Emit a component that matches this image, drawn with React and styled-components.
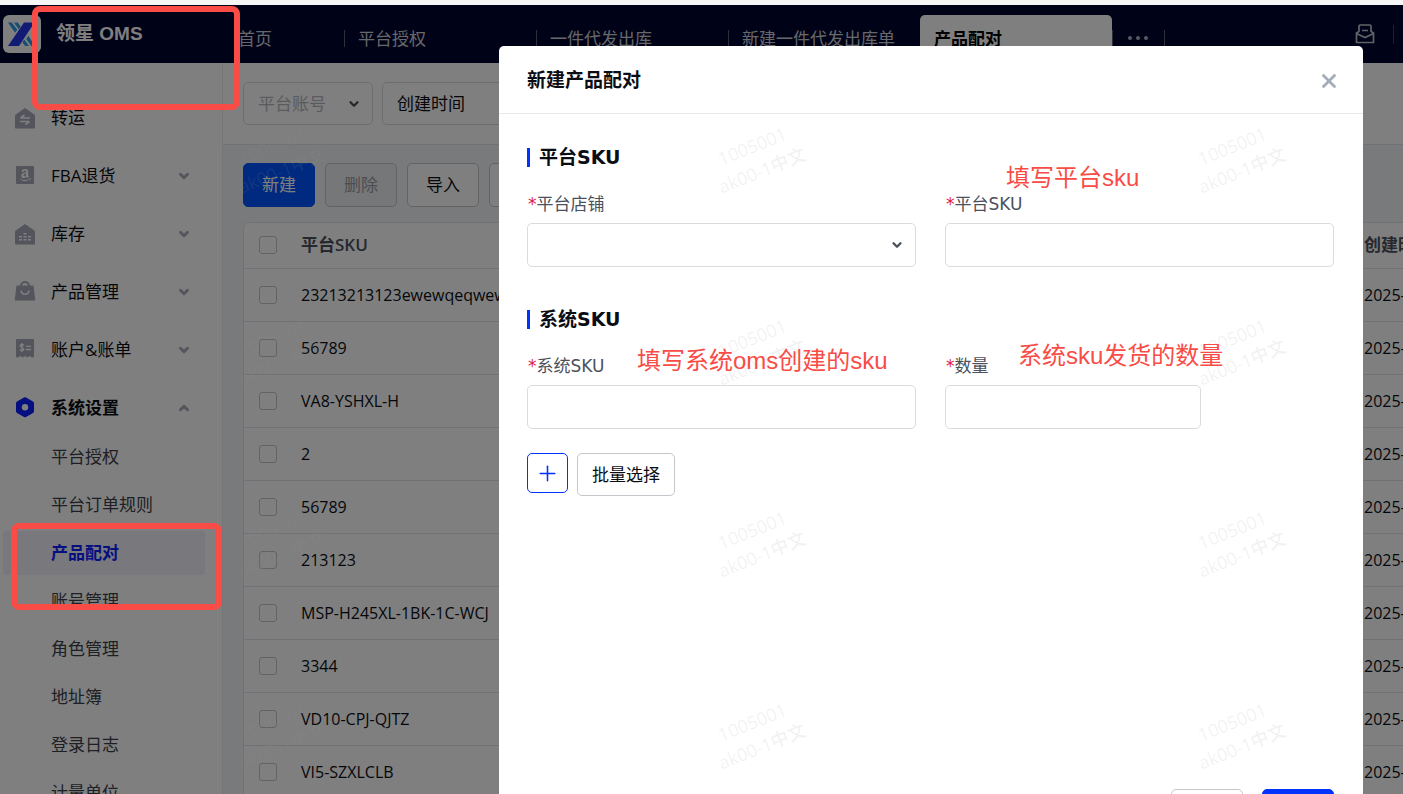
import { Fragment } from 'react';
import styled, { createGlobalStyle } from 'styled-components';
import { ChevronDown, ChevronUp, Plus, X } from 'lucide-react';
import { FaAmazon } from 'react-icons/fa';

const GlobalStyle = createGlobalStyle`
  * {
    box-sizing: border-box;
  }

  body {
    margin: 0;
    overflow: hidden;
    background: #f6f6f6;
    color: #0b0d14;
    font-family: 'Open Sans', 'Noto Sans CJK SC', sans-serif;
    font-size: 17px;
    line-height: 24px;
  }

  button, input, select {
    font: inherit;
    color: inherit;
  }

  button {
    padding: 0;
    border: none;
    background: none;
  }

  a {
    color: inherit;
    text-decoration: none;
  }
`;

const Page = styled.div`
  position: relative;
  height: 100vh;
  padding-top: 5px;
  overflow: hidden;
`;

const Frame = styled.div`
  position: relative;
  display: flex;
  flex-direction: column;
  height: 100%;
  background: #fff;
  overflow: hidden;
`;

const Header = styled.header`
  display: flex;
  flex: none;
  height: 58px;
  background: #00042e;
`;

const Brand = styled.div`
  display: flex;
  align-items: center;
  gap: 15px;
  width: 224px;
  padding-left: 3px;
  color: #fff;
  font-family: 'Liberation Sans', 'Noto Sans CJK SC', sans-serif;
  font-size: 19px;
  font-weight: 700;
`;

const Tabs = styled.nav`
  display: flex;
  align-items: flex-end;
`;

const Tab = styled.button`
  position: relative;
  width: ${({ $width }) => $width || 192}px;
  height: 48px;
  padding-left: 14px;
  border-radius: 5px 5px 0 0;
  background: ${({ $active }) => ($active ? '#fff' : 'transparent')};
  color: ${({ $active }) => ($active ? '#000' : '#cdd0d8')};
  font-weight: ${({ $active }) => ($active ? 700 : 400)};
  text-align: left;

  &::after {
    content: '';
    position: absolute;
    top: 15px;
    right: -1px;
    width: 1px;
    height: 17px;
    background: #5b5e75;
  }
`;

const MoreDots = styled.svg`
  display: block;
`;

const HeaderTools = styled.div`
  display: flex;
  align-items: center;
  gap: 18px;
  margin-left: auto;
  padding-right: 9px;
`;

const ToolDivider = styled.span`
  width: 1px;
  height: 19px;
  background: #3d405c;
`;

const Layout = styled.div`
  display: flex;
  flex: 1;
  min-height: 0;
`;

const Sidebar = styled.nav`
  flex: none;
  width: 223px;
  padding: 22px 17px 0 3px;
  border-right: 1px solid #e9ebef;
`;

const MenuItem = styled.button`
  display: flex;
  align-items: center;
  width: 100%;
  height: 50px;
  margin-top: 8px;
  padding: 0 14px 0 11px;
  color: #0b0d14;
  font-weight: ${({ $active }) => ($active ? 700 : 400)};

  svg {
    flex: none;
  }

  .arrow {
    margin-left: auto;
    color: #a9abb8;
  }
`;

const MenuText = styled.span`
  margin-left: 15px;
`;

const SubItem = styled.a`
  display: block;
  height: 44px;
  margin: 2px 0 4px;
  padding-left: 48px;
  border-radius: 4px;
  background: ${({ $active }) => ($active ? '#f0f1fb' : 'transparent')};
  color: ${({ $active }) => ($active ? '#0a1eff' : '#3c3f4a')};
  font-weight: ${({ $active }) => ($active ? 700 : 400)};
  line-height: 44px;
`;

const Main = styled.main`
  flex: 1;
  min-width: 0;
  background: #f3f5f9;
  overflow: hidden;
`;

const Filters = styled.div`
  display: flex;
  gap: 9px;
  padding: 19px 20px;
  border-bottom: 1px solid #e3e5ea;
  background: #fff;
`;

const SelectBox = styled.div`
  position: relative;
  width: ${({ $width }) => $width || '100%'};

  svg {
    position: absolute;
    top: 50%;
    right: 12px;
    margin-top: -7px;
    color: #4b505c;
    pointer-events: none;
  }
`;

const Select = styled.select`
  display: block;
  width: 100%;
  height: ${({ $tall }) => ($tall ? 44 : 43)}px;
  padding: 0 14px;
  border: 1px solid #d9dbdf;
  border-radius: 5px;
  background: #fff;
  color: ${({ $muted }) => ($muted ? '#b4b6bd' : '#0b0d14')};
  appearance: none;
`;

const Toolbar = styled.div`
  display: flex;
  gap: 10px;
  padding: 18px 20px 15px;
`;

const Button = styled.button`
  flex: none;
  min-width: 72px;
  height: ${({ $height }) => $height || 44}px;
  padding: 0 14px;
  border: 1px solid #c4c6cb;
  border-radius: 5px;
  background: #fff;
  color: #0b0d14;
`;

const PrimaryButton = styled(Button)`
  border-color: ${({ $color }) => $color || '#0033ff'};
  background: ${({ $color }) => $color || '#0033ff'};
  color: #fff;
`;

const DisabledButton = styled(Button)`
  background: #eceef1;
  color: #9a9da6;
`;

const TableCard = styled.div`
  margin-left: 20px;
  border: 1px solid #e3e5ea;
  border-right: none;
  border-radius: 6px 0 0 0;
  background: #fff;
  overflow: hidden;
`;

const Table = styled.table`
  width: calc(100% + 160px);
  border-collapse: collapse;
  table-layout: fixed;
  font-size: 16px;

  th, td {
    height: 53px;
    padding: 0;
    border-bottom: 1px solid #e3e5ea;
    text-align: left;
    white-space: nowrap;
  }

  th {
    height: 45px;
    color: #4b505c;
    font-size: 17px;
    font-weight: 600;
  }

  th:first-child, td:first-child {
    width: 57px;
    padding-left: 15px;
  }

  th:last-child {
    width: 199px;
  }
`;

const Check = styled.input`
  display: block;
  width: 18px;
  height: 18px;
  margin: 0;
  border: 1px solid #c4c6cb;
  border-radius: 3px;
  appearance: none;
`;

const Overlay = styled.div`
  position: absolute;
  inset: 0;
  display: flex;
  align-items: flex-start;
  justify-content: flex-end;
  padding: 41px 40px 0;
  background: rgba(0, 0, 0, 0.5);
  overflow: hidden;
`;

const Dialog = styled.section`
  display: flex;
  flex-direction: column;
  width: 864px;
  max-width: 100%;
  min-height: 820px;
  border-radius: 5px;
  background: #fff;
`;

const DialogHeader = styled.div`
  display: flex;
  align-items: center;
  justify-content: space-between;
  height: 68px;
  padding: 0 23px 0 28px;
  border-bottom: 1px solid #e8e8ea;
`;

const DialogTitle = styled.h2`
  margin: 0;
  font-size: 19px;
  font-weight: 700;
`;

const CloseButton = styled.button`
  display: flex;
  padding-top: 2px;
  color: #a3acb9;
`;

const DialogBody = styled.div`
  display: flex;
  flex: 1;
  flex-direction: column;
  gap: 43px;
  padding: 34px 29px 0 28px;
`;

const SectionTitle = styled.h3`
  margin: 0 0 25px;
  padding-left: 9px;
  border-left: 3px solid #0033ff;
  font-family: 'DejaVu Sans', 'Noto Sans CJK SC', sans-serif;
  font-size: 19px;
  font-weight: 700;
  line-height: 19px;
`;

const Fields = styled.div`
  display: grid;
  grid-template-columns: 1fr 1fr;
  gap: 29px;
`;

const Label = styled.label`
  display: block;
  margin-bottom: 7px;
  padding-left: 1px;
  color: #4b505c;
  font-family: 'DejaVu Sans', 'Noto Sans CJK SC', sans-serif;

  &::before {
    content: '*';
    color: #e02043;
  }
`;

const Input = styled.input`
  display: block;
  width: ${({ $width }) => $width || '100%'};
  height: 44px;
  padding: 0 14px;
  border: 1px solid #d9dbdf;
  border-radius: 5px;
  background: #fff;
`;

const Actions = styled.div`
  display: flex;
  align-items: flex-start;
  gap: 9px;
  margin-top: 24px;
`;

const AddButton = styled.button`
  display: flex;
  align-items: center;
  justify-content: center;
  width: 41px;
  height: 40px;
  border: 1px solid #0033ff;
  border-radius: 5px;
  color: #0033ff;
`;

const DialogFooter = styled.div`
  display: flex;
  justify-content: flex-end;
  gap: 19px;
  padding: 0 29px 33px;
`;

const Watermarks = styled.div`
  position: absolute;
  top: 64px;
  right: 0;
  bottom: 0;
  left: 223px;
  display: grid;
  grid-template-columns: repeat(3, 480px);
  grid-auto-rows: 192px;
  overflow: hidden;
  pointer-events: none;
`;

const Watermark = styled.div`
  width: 108px;
  height: 192px;
  padding-top: 68px;
  color: rgba(150, 150, 150, 0.13);
  font-size: 18px;
  font-weight: 500;
  line-height: 26px;
  text-align: center;

  span {
    display: block;
    transform: rotate(-22deg);
  }
`;

const Mark = styled.div`
  position: absolute;
  top: ${({ $top }) => $top}px;
  left: ${({ $left }) => $left}px;
  width: ${({ $width }) => $width}px;
  height: ${({ $height }) => $height}px;
  border: 6px solid #f94c46;
  border-radius: 8px;
  pointer-events: none;
`;

const Note = styled.div`
  position: absolute;
  top: ${({ $top }) => $top}px;
  left: ${({ $left }) => $left}px;
  color: #f94c46;
  font-family: 'Liberation Sans', 'Noto Sans CJK SC', sans-serif;
  font-size: 24px;
  line-height: 30px;
  white-space: nowrap;
  pointer-events: none;
`;

const Logo = () => (
  <svg width="38" height="38" viewBox="0 0 38 38">
    <rect width="38" height="38" rx="6" fill="#fff" />
    <path d="M5 7.500h3.700l5.600 7.300-2.200 3zM11 7.500h3.700l3 3.900-2 2.900z" fill="#2e9be6" />
    <path d="M21 7.500h10.500L16 31H5z" fill="#2337e8" />
    <path d="M32 31h-3.700l-5.100-7 2.200-3.200zM26 31h-3.700l-3-3.700 2-2.900z" fill="#2e9be6" />
  </svg>
);

const InboxIcon = () => (
  <svg width="20" height="20" viewBox="0 0 20 20" fill="none" stroke="#c3c6d0" strokeWidth="1.700">
    <path d="M4 8V2.200c0-.7.400-1.200 1.200-1.200h9.600c.8 0 1.200.5 1.200 1.200V8" />
    <path d="M4 7.500L1.500 9v9.500h17V9L16 7.500M1.500 9.500L10 13.500l8.500-4M7 6.500h6" />
  </svg>
);

const HouseShape = 'M11 1l9 6.200c.6.400 1 1 1 1.800v11.500c0 .6-.4 1-1 1H2c-.6 0-1-.4-1-1V9c0-.8.400-1.400 1-1.800z';

const icons = {
  transfer: (
    <svg width="22" height="22" viewBox="0 0 22 22">
      <path d={HouseShape} fill="#a9abb8" />
      <path d="M6.500 11h9.500M6.500 11l4-3M15.500 14.500H6M15.500 14.500l-4 3" fill="none" stroke="#fff" strokeWidth="1.600" />
    </svg>
  ),
  amazon: (
    <svg width="22" height="22" viewBox="0 0 22 22">
      <rect x="2" y="1" width="18" height="18" rx="1" fill="#a9abb8" />
      <FaAmazon x="4" y="3" size={14} color="#fff" />
    </svg>
  ),
  stock: (
    <svg width="22" height="22" viewBox="0 0 22 22">
      <path d={HouseShape} fill="#a9abb8" />
      <path
        d="M9.500 10.700h3M5 13.700h3M9.500 13.700h3M14 13.700h3M5 16.700h3M9.500 16.700h3M14 16.700h3"
        stroke="#fff"
        strokeWidth="1.500"
      />
    </svg>
  ),
  product: (
    <svg width="22" height="22" viewBox="0 0 22 22">
      <path d="M7 6V5a4 4 0 0 1 8 0V6" fill="none" stroke="#a9abb8" strokeWidth="2" />
      <path d="M2.500 4.500h17l1.700 14c.1.600-.3 1-.9 1H1.700c-.6 0-1-.4-.9-1z" fill="#a9abb8" />
      <path d="M7 9.500c.6 5 7.400 5 8 0" fill="none" stroke="#fff" strokeWidth="1.600" />
    </svg>
  ),
  bill: (
    <svg width="22" height="22" viewBox="0 0 22 22">
      <path d="M3 0h16c.6 0 1 .4 1 1v17l-2 .5-2.300-1.500-2.400 1.500L11 17l-2.300 1.500L6.300 17 4 18.500 2 18V1c0-.6.400-1 1-1z" fill="#a9abb8" />
      <path d="M9.800 6.500C9 5 6.300 5.200 6.300 6.900c0 2 3.600 1.200 3.600 3.200 0 1.900-3 2-3.900.3M8 4v9M12 7.300h5M12 10.500h5" fill="none" stroke="#fff" strokeWidth="1.300" />
    </svg>
  ),
  settings: (
    <svg width="22" height="22" viewBox="0 0 22 22">
      <path d="M10 .5c.6-.4 1.400-.4 2 0l7 4c.6.400 1 1 1 1.700v8c0 .7-.4 1.300-1 1.700l-7 4c-.6.300-1.400.3-2 0l-7-4c-.6-.4-1-1-1-1.700v-8c0-.7.400-1.300 1-1.700z" fill="#0a1eff" />
      <circle cx="11" cy="10.200" r="3.200" fill="#fff" />
    </svg>
  ),
};

const menu = [
  { icon: 'transfer', text: '转运' },
  { icon: 'amazon', text: 'FBA退货', arrow: true },
  { icon: 'stock', text: '库存', arrow: true },
  { icon: 'product', text: '产品管理', arrow: true },
  { icon: 'bill', text: '账户&账单', arrow: true },
  {
    icon: 'settings',
    text: '系统设置',
    arrow: true,
    children: ['平台授权', '平台订单规则', '产品配对', '账号管理', '角色管理', '地址簿', '登录日志', '计量单位'],
  },
];

const rows = [
  '23213213123ewewqeqwew',
  '56789',
  'VA8-YSHXL-H',
  '2',
  '56789',
  '213123',
  'MSP-H245XL-1BK-1C-WCJ',
  '3344',
  'VD10-CPJ-QJTZ',
  'VI5-SZXLCLB',
];

export default function App() {
  return (
    <Page>
      <GlobalStyle />
      <Frame>
        <Header>
          <Brand>
            <Logo />
            <span>领星 OMS</span>
          </Brand>
          <Tabs>
            <Tab $width={120}>首页</Tab>
            <Tab>平台授权</Tab>
            <Tab>一件代发出库</Tab>
            <Tab>新建一件代发出库单</Tab>
            <Tab $active>产品配对</Tab>
            <Tab $width={52} aria-label="更多">
              <MoreDots width="24" height="6" viewBox="0 0 24 6" fill="#b4b7c2">
                <circle cx="4" cy="2" r="2" />
                <circle cx="12" cy="2" r="2" />
                <circle cx="20" cy="2" r="2" />
              </MoreDots>
            </Tab>
          </Tabs>
          <HeaderTools>
            <InboxIcon />
            <ToolDivider />
          </HeaderTools>
        </Header>

        <Layout>
          <Sidebar>
            {menu.map((item) => (
              <Fragment key={item.text}>
                <MenuItem $active={!!item.children}>
                  {icons[item.icon]}
                  <MenuText>{item.text}</MenuText>
                  {item.arrow && !item.children && <ChevronDown className="arrow" size={14} strokeWidth={5} />}
                  {item.children && <ChevronUp className="arrow" size={14} strokeWidth={5} />}
                </MenuItem>
                {item.children?.map((child) => (
                  <SubItem key={child} href="#" $active={child === '产品配对'}>
                    {child}
                  </SubItem>
                ))}
              </Fragment>
            ))}
          </Sidebar>

          <Main>
            <Filters>
              <SelectBox $width="130px">
                <Select $muted aria-label="平台账号">
                  <option>平台账号</option>
                </Select>
                <ChevronDown size={14} strokeWidth={4} />
              </SelectBox>
              <SelectBox $width="160px">
                <Select aria-label="创建时间">
                  <option>创建时间</option>
                </Select>
                <ChevronDown size={14} strokeWidth={4} />
              </SelectBox>
            </Filters>
            <Toolbar>
              <PrimaryButton $color="#0055ff">新建</PrimaryButton>
              <DisabledButton disabled>删除</DisabledButton>
              <Button>导入</Button>
              <Button aria-label="导出" />
            </Toolbar>
            <TableCard>
              <Table>
                <thead>
                  <tr>
                    <th><Check type="checkbox" aria-label="全选" /></th>
                    <th>平台SKU</th>
                    <th>创建时间</th>
                  </tr>
                </thead>
                <tbody>
                  {rows.map((sku, i) => (
                    <tr key={i}>
                      <td><Check type="checkbox" aria-label={sku} /></td>
                      <td>{sku}</td>
                      <td>2025-</td>
                    </tr>
                  ))}
                </tbody>
              </Table>
            </TableCard>
          </Main>
        </Layout>

        <Overlay>
          <Dialog role="dialog" aria-labelledby="dialog-title">
            <DialogHeader>
              <DialogTitle id="dialog-title">新建产品配对</DialogTitle>
              <CloseButton aria-label="关闭">
                <X size={22} strokeWidth={3} />
              </CloseButton>
            </DialogHeader>
            <DialogBody>
              <div>
                <SectionTitle>平台SKU</SectionTitle>
                <Fields>
                  <div>
                    <Label htmlFor="shop">平台店铺</Label>
                    <SelectBox>
                      <Select id="shop" $tall defaultValue="">
                        <option value="" />
                      </Select>
                      <ChevronDown size={14} strokeWidth={4} />
                    </SelectBox>
                  </div>
                  <div>
                    <Label htmlFor="platform-sku">平台SKU</Label>
                    <Input id="platform-sku" />
                  </div>
                </Fields>
              </div>
              <div>
                <SectionTitle>系统SKU</SectionTitle>
                <Fields>
                  <div>
                    <Label htmlFor="system-sku">系统SKU</Label>
                    <Input id="system-sku" />
                  </div>
                  <div>
                    <Label htmlFor="quantity">数量</Label>
                    <Input id="quantity" $width="256px" />
                  </div>
                </Fields>
                <Actions>
                  <AddButton aria-label="添加">
                    <Plus size={25} strokeWidth={1.5} />
                  </AddButton>
                  <Button $height={43}>批量选择</Button>
                </Actions>
              </div>
            </DialogBody>
            <DialogFooter>
              <Button>取消</Button>
              <PrimaryButton>确定</PrimaryButton>
            </DialogFooter>
          </Dialog>
        </Overlay>
      </Frame>

      <Watermarks aria-hidden="true">
        {Array.from({ length: 12 }, (_, i) => (
          <Watermark key={i}>
            <span>
              1005001
              <br />
              ak00-1中文
            </span>
          </Watermark>
        ))}
      </Watermarks>

      <Mark $left={32} $top={6} $width={208} $height={104} />
      <Mark $left={11} $top={523} $width={211} $height={87} />
      <Note $left={1006} $top={163}>填写平台sku</Note>
      <Note $left={637} $top={346}>填写系统oms创建的sku</Note>
      <Note $left={1018} $top={341}>系统sku发货的数量</Note>
    </Page>
  );
}
